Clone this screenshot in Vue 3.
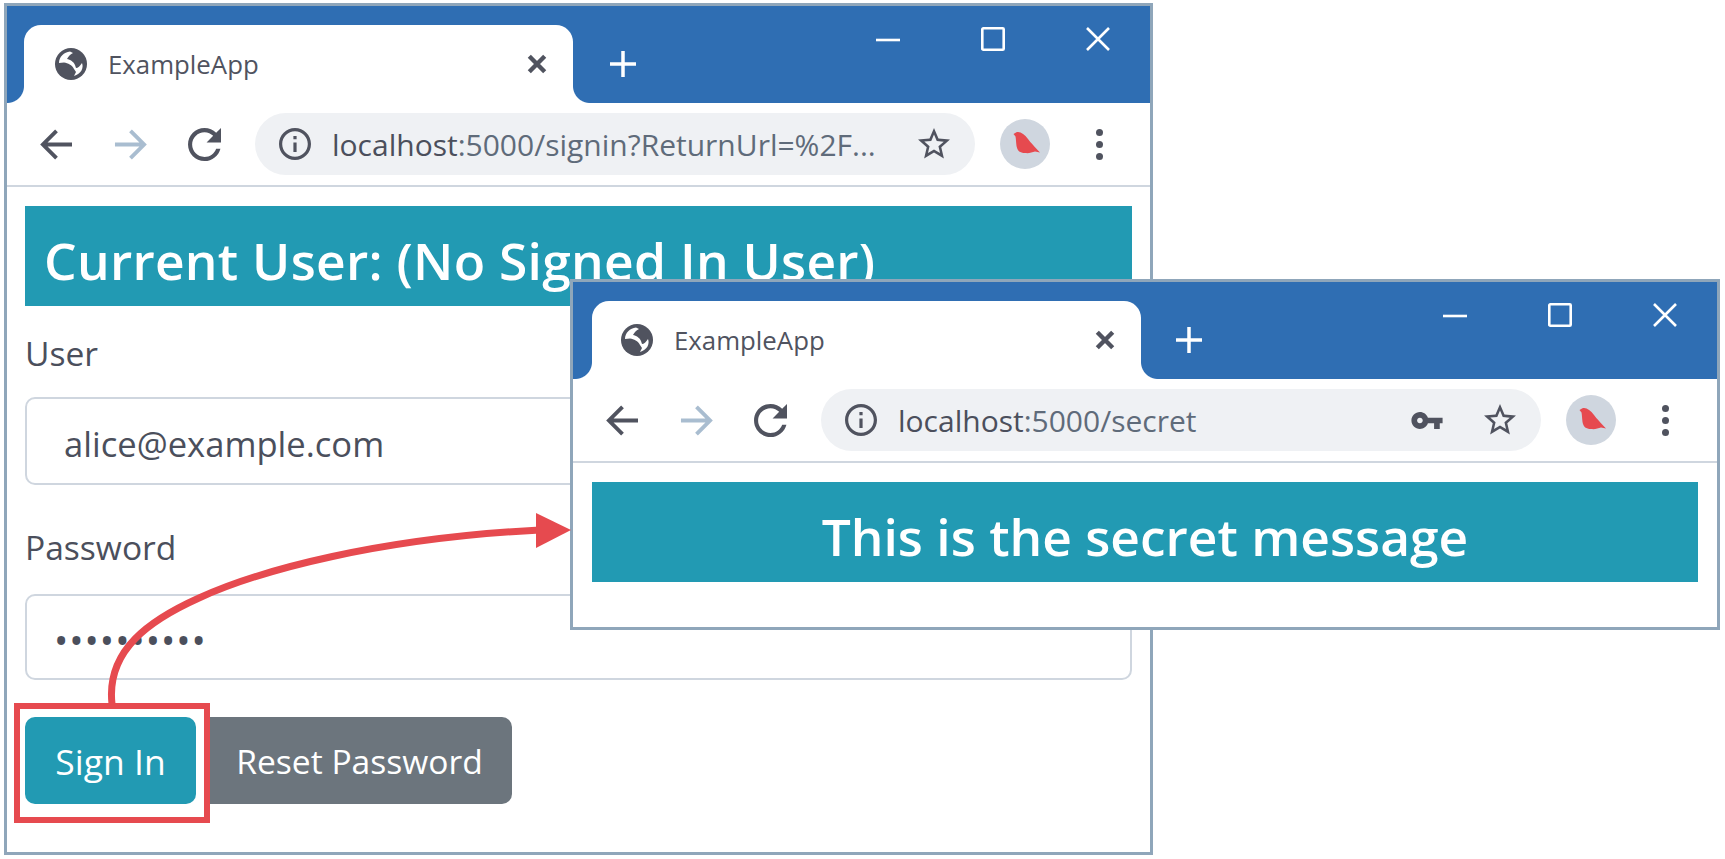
<script setup>
// The two browser windows of the sign-in figure
const windows = [
  { id: 'signin', host: 'localhost', rest: ':5000/signin?ReturnUrl=%2F...', hasKey: false },
  { id: 'secret', host: 'localhost', rest: ':5000/secret', hasKey: true }
];
</script>

<template>
  <div class="stage">
    <div v-for="win in windows" :key="win.id" :class="['browser', `browser-${win.id}`]">
      <div class="titlebar">
        <div class="tab">
          <svg class="globe" viewBox="0 0 32 32">
            <circle cx="16" cy="16" r="16" fill="#50535f" />
            <path d="M4 15C4 9 9 4 15 3.500L18 5C15 6.500 13 9 12 11C15 11.500 19 14 20 17L21 20C23 20 25 18 27 15C29 20 26 26 19 28L21 24L19 21C17 17 13 15 9 14.500Z" fill="#fff" />
          </svg>
          <span class="tab-title">ExampleApp</span>
          <svg class="tab-close" viewBox="0 0 20 20">
            <path d="M3 3l14 14M17 3L3 17" stroke="#50535f" stroke-width="4" fill="none" />
          </svg>
        </div>
        <svg class="new-tab" viewBox="0 0 28 28">
          <path d="M14 1v26M1 14h26" stroke="#fff" stroke-width="3.5" fill="none" />
        </svg>
        <div class="controls">
          <svg viewBox="0 0 24 24"><path d="M0 13h24" stroke="#fff" stroke-width="2.6" /></svg>
          <svg viewBox="0 0 24 24"><rect x="1.300" y="1.300" width="21.400" height="21.400" rx="1" fill="none" stroke="#fff" stroke-width="2.600" /></svg>
          <svg viewBox="0 0 24 24"><path d="M1 1l22 22M23 1L1 23" stroke="#fff" stroke-width="2.6" fill="none" /></svg>
        </div>
      </div>

      <div class="toolbar">
        <div class="nav-btn">
          <svg class="arrow" viewBox="0 0 34 34">
            <path d="M33 17H3M17 3L3 17l14 14" stroke="#50535f" stroke-width="4" fill="none" />
          </svg>
        </div>
        <div class="nav-btn">
          <svg class="arrow" viewBox="0 0 34 34">
            <path d="M1 17h30M17 3l14 14-14 14" stroke="#a9bdd0" stroke-width="4" fill="none" />
          </svg>
        </div>
        <div class="nav-btn">
          <svg class="arrow" viewBox="4 4 16 16">
            <path fill="#50535f" d="M17.65 6.35C16.2 4.9 14.21 4 12 4c-4.42 0-7.99 3.58-7.99 8s3.57 8 7.99 8c3.73 0 6.84-2.55 7.73-6h-2.08c-.82 2.33-3.04 4-5.65 4-3.31 0-6-2.69-6-6s2.69-6 6-6c1.66 0 3.14.69 4.22 1.78L13 11h7V4l-2.35 2.35z" />
          </svg>
        </div>

        <div class="omnibox">
          <svg class="info" viewBox="2 2 20 20">
            <path fill="#50535f" d="M11 7h2v2h-2zm0 4h2v6h-2zm1-9C6.48 2 2 6.48 2 12s4.48 10 10 10 10-4.48 10-10S17.52 2 12 2zm0 18c-4.41 0-8-3.59-8-8s3.59-8 8-8 8 3.59 8 8-3.59 8-8 8z" />
          </svg>
          <span class="url"><span class="url-host">{{ win.host }}</span>{{ win.rest }}</span>
          <svg v-if="win.hasKey" class="key" viewBox="1 6 22 12">
            <path fill="#50535f" d="M12.65 10C11.83 7.67 9.61 6 7 6c-3.31 0-6 2.69-6 6s2.69 6 6 6c2.61 0 4.83-1.67 5.65-4H17v4h4v-4h2v-4H12.65zM7 14c-1.1 0-2-.9-2-2s.9-2 2-2 2 .9 2 2-.9 2-2 2z" />
          </svg>
          <svg class="star" viewBox="2 2 20 20">
            <path fill="#50535f" d="M22 9.24l-7.19-.62L12 2 9.19 8.63 2 9.24l5.46 4.73L5.82 21 12 17.27 18.18 21l-1.63-7.03L22 9.24zM12 15.4l-3.76 2.27 1-4.28-3.32-2.88 4.38-.38L12 6.1l1.71 4.04 4.38.38-3.32 2.88 1 4.28L12 15.4z" />
          </svg>
        </div>

        <svg class="avatar" viewBox="0 0 50 50">
          <circle cx="25" cy="25" r="25" fill="#cfd6df" />
          <path fill="#e64a4f" d="M13.500 15L16 13.500C20 12 24 15 28 20C31 24 34 27 40 33.500L35 32.500C32 33.500 29 34.500 25 34C20 34 17.500 32 16.500 27C16 23 16 20 15.500 17.500Z" />
        </svg>
        <div class="menu"><i></i><i></i><i></i></div>
      </div>

      <div v-if="win.id === 'signin'" class="content">
        <h3 class="banner banner-user">Current User: (No Signed In User)</h3>
        <label class="field-label first">User</label>
        <input class="field field-user" type="text" value="alice@example.com" readonly />
        <label class="field-label">Password</label>
        <input class="field field-pass" type="password" value="mysecret12" readonly />
        <div class="actions">
          <button class="btn btn-info">Sign In</button>
          <button class="btn btn-secondary">Reset Password</button>
        </div>
      </div>
      <div v-else class="content content-secret">
        <h3 class="banner banner-center">This is the secret message</h3>
      </div>
    </div>

    <!-- callout drawn over the sign-in window -->
    <svg class="callout" viewBox="0 0 1725 859">
      <rect x="17" y="706" width="190" height="114" fill="none" stroke="#e64a4f" stroke-width="6" />
      <path d="M112 704C106 650 150 620 199 598C260 570 380 538 540 530" fill="none" stroke="#e64a4f" stroke-width="7" />
      <path d="M536 513L571 530 536 548z" fill="#e64a4f" />
    </svg>
  </div>
</template>

<style scoped>
.stage {
  position: relative;
  width: 1725px;
  height: 859px;
  overflow: hidden;
  background: #fff;
  font-family: "Open Sans", "Noto Sans", sans-serif;
  color: #4b4f5c;
}

.browser {
  position: absolute;
  box-sizing: border-box;
  background: #fff;
  border: 3px solid #8fa6ba;
  display: flex;
  flex-direction: column;
}

.browser-signin {
  left: 4px;
  top: 3px;
  width: 1149px;
  height: 852px;
}

.browser-secret {
  left: 570px;
  top: 279px;
  width: 1150px;
  height: 351px;
  z-index: 2;
}

.titlebar {
  height: 97px;
  flex: none;
  display: flex;
  background: #2f6eb3;
}

.tab {
  position: relative;
  box-sizing: border-box;
  width: 549px;
  height: 78px;
  margin: 19px 0 0 17px;
  padding: 0 24px 0 31px;
  display: flex;
  align-items: center;
  background: #fff;
  border-radius: 17px 17px 0 0;
}

.browser-secret .tab {
  margin-left: 19px;
  padding-left: 29px;
}

.tab::before,
.tab::after {
  content: "";
  position: absolute;
  bottom: 0;
  width: 17px;
  height: 17px;
}

.tab::before {
  left: -17px;
  background: radial-gradient(circle at 0 0, #2f6eb3 16.5px, #fff 17.5px);
}

.tab::after {
  right: -17px;
  background: radial-gradient(circle at 100% 0, #2f6eb3 16.5px, #fff 17.5px);
}

.globe {
  width: 32px;
  height: 32px;
}

.tab-title {
  margin-left: 21px;
  font-size: 25.8px;
  color: #50535f;
}

.tab-close {
  width: 22px;
  height: 22px;
  margin-left: auto;
  margin-right: 1px;
}

.new-tab {
  width: 28px;
  height: 28px;
  margin: 44px 0 0 36px;
}

.browser-secret .new-tab {
  margin-left: 34px;
}

.controls {
  display: flex;
  gap: 81px;
  margin: 21px 40px 0 auto;
  align-self: flex-start;
}

.controls svg {
  width: 24px;
  height: 24px;
}

.toolbar {
  box-sizing: border-box;
  height: 84px;
  flex: none;
  padding-left: 12px;
  display: flex;
  align-items: center;
  border-bottom: 2px solid #cfd6df;
}

.nav-btn {
  width: 74px;
  display: flex;
  justify-content: center;
}

.arrow {
  width: 33px;
  height: 33px;
}

.omnibox {
  box-sizing: border-box;
  width: 720px;
  height: 62px;
  margin-left: 14px;
  padding: 0 25px 0 24px;
  display: flex;
  align-items: center;
  border-radius: 31px;
  background: #eff1f4;
}

.info {
  width: 32px;
  height: 32px;
  flex: none;
}

.url {
  margin-left: 21px;
  font-size: 30px;
  color: #5f6b7a;
  white-space: nowrap;
}

.url-host {
  color: #4b4f5c;
}

.key {
  width: 32px;
  height: 17px;
  margin-left: auto;
}

.star {
  width: 32px;
  height: 32px;
  margin-left: auto;
}

.key + .star {
  margin-left: 41px;
}

.avatar {
  width: 50px;
  height: 50px;
  margin-left: 25px;
  flex: none;
}

.menu {
  width: 8px;
  margin-left: 46px;
  display: flex;
  flex-direction: column;
  gap: 5px;
}

.menu i {
  width: 7px;
  height: 7px;
  border-radius: 50%;
  background: #50535f;
}

.content {
  padding: 19px 18px 0;
}

.content-secret {
  padding: 19px 19px 0 19px;
}

.banner {
  box-sizing: border-box;
  height: 100px;
  margin: 0;
  padding: 8px 0 0 19px;
  display: flex;
  align-items: center;
  background: #229ab3;
  color: #fff;
  font-size: 51.5px;
  font-weight: 600;
  white-space: nowrap;
}

.banner-user {
  letter-spacing: 0.27px;
}

.banner-center {
  padding-left: 0;
  justify-content: center;
}

.field-label {
  display: block;
  height: 40px;
  margin: 42px 0 27px;
  font-size: 33.6px;
  line-height: 40px;
}

.field-label.first {
  margin: 27px 0 24px;
}

.field {
  box-sizing: border-box;
  display: block;
  width: 100%;
  height: 86px;
  padding: 0 37px;
  border: 2px solid #cfd6df;
  border-radius: 10px;
  background: #fff;
  color: #4b4f5c;
  font-family: inherit;
  font-size: 34.6px;
  outline: none;
}

.field-user {
  height: 88px;
  padding-top: 5px;
}

.field-pass {
  padding: 5px 0 0 27px;
  font-size: 38px;
  letter-spacing: 1px;
}

.actions {
  display: flex;
  margin-top: 37px;
}

.btn {
  height: 87px;
  border: none;
  border-radius: 10px;
  color: #fff;
  font-family: inherit;
  font-size: 33.6px;
}

.btn-info {
  width: 171px;
  font-size: 35.5px;
  background: #229ab3;
}

.btn-secondary {
  width: 305px;
  margin-left: 11px;
  padding: 0;
  border-radius: 0 10px 10px 0;
  background: #6c757d;
}

.callout {
  position: absolute;
  left: 0;
  top: 0;
  width: 1725px;
  height: 859px;
  z-index: 3;
  pointer-events: none;
}
</style>

<style>
html,
body {
  margin: 0;
  background: #fff;
}
</style>
